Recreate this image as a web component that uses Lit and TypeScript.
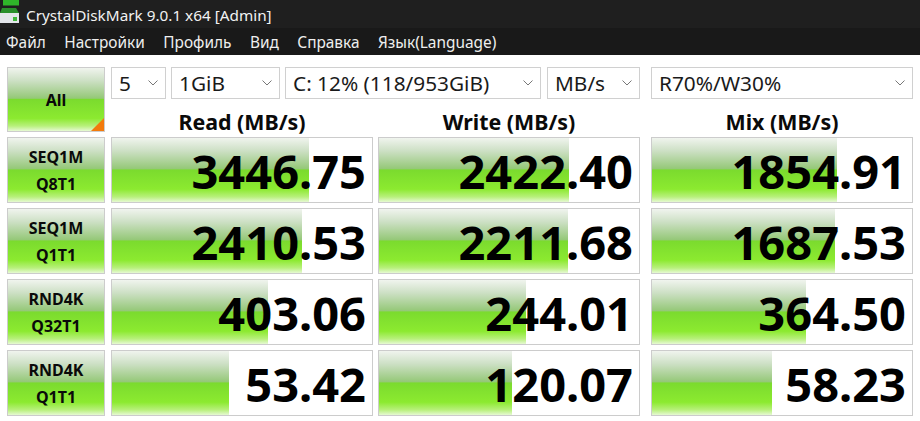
import { LitElement, html, css, svg } from "lit";
import { customElement } from "lit/decorators.js";

const rows = [
  { a: "SEQ1M", b: "Q8T1", cells: [["3446.75", 197], ["2422.40", 190], ["1854.91", 185]] },
  { a: "SEQ1M", b: "Q1T1", cells: [["2410.53", 190], ["2211.68", 189], ["1687.53", 183]] },
  { a: "RND4K", b: "Q32T1", cells: [["403.06", 156], ["244.01", 147], ["364.50", 154]] },
  { a: "RND4K", b: "Q1T1", cells: [["53.42", 117], ["120.07", 133], ["58.23", 120]] },
] as const;

const chevron = svg`<svg class="chev" width="10" height="6" viewBox="0 0 10 6"><path d="M.5.5 5 5 9.5.5" fill="none" stroke="#777" stroke-width="1"/></svg>`;

@customElement("app-root")
export class AppRoot extends LitElement {
  static styles = css`
    :host { display: block; width: 920px; height: 421px; overflow: hidden; background: #fff; font-family: "Noto Sans", "Open Sans", sans-serif; color: #000; --bar: linear-gradient(#f0f4ee 0%, #cde0c5 20%, #95c878 48%, #7bdb2e 50%, #8cea30 80%, #b8f07c 92%, #e6f9d3 100%); }
    .title { height: 28px; background: #1f1f1f; color: #f2f2f2; display: flex; align-items: center; gap: 5px; font-size: 15.3px; box-sizing: border-box; padding-top: 1px; }
    .logo { flex: none; display: block; align-self: flex-start; margin-top: -1px; }
    .menu { height: 27px; background: #191919; color: #eee; display: flex; align-items: center; font-size: 15.4px; padding-left: 6px; gap: 18.5px; box-sizing: border-box; padding-top: 2px; }
    .main { display: grid; grid-template-columns: 99px 262px 262px 262px; grid-template-rows: 32px 28px repeat(4, 66px); gap: 5px; padding: 12px 0 0 7px; }
    .main > * { box-sizing: border-box; }
    .btn { width: 98px; border: 1px solid #ccc; background: var(--bar); display: flex; flex-direction: column; align-items: center; justify-content: center; font-weight: 700; font-size: 16px; position: relative; color: #0a0a0a; padding-top: 1px; }
    .all { grid-row: 1 / 3; height: 65px; }
    .corner { position: absolute; right: 0; bottom: 0; width: 0; height: 0; border-style: solid; border-width: 0 0 13px 13px; border-color: transparent transparent #f37a0c transparent; }
    .selects { grid-column: 2 / 5; display: flex; gap: 5px; height: 32px; }
    .sel { flex: none; box-sizing: border-box; height: 32px; border: 1px solid #d0d0d0; background: #fff; display: flex; align-items: center; justify-content: space-between; padding: 0 7px 1px 7px; font-size: 20.8px; color: #1a1a1a; white-space: nowrap; }
    .chev { flex: none; margin-top: 1px; }
    .w1 { width: 55px; } .w2 { width: 109px; } .w3 { width: 256px; } .w4 { width: 93px; margin: 0 6px 0 1px; } .w5 { width: 262px; }
    .head { font-weight: 700; font-size: 21.4px; line-height: 22px; padding-top: 7px; text-align: center; color: #0a0a0a; white-space: nowrap; }
    .head1 { grid-column: 2; }
    .cell { height: 66px; border: 1px solid #ccc; background: #fff; position: relative; display: flex; align-items: center; justify-content: flex-end; padding: 2px 6px 0 0; font-weight: 700; font-size: 47px; overflow: hidden; }
    .fill { position: absolute; left: 0; top: 0; bottom: 0; background: var(--bar); }
    .val { position: relative; line-height: 1; }
    .third { margin-left: 6px; margin-right: -6px; }
    .lab { line-height: 27px; }
  `;

  render() {
    return html`
      <div class="title">
        <svg class="logo" width="21" height="26" viewBox="0 0 21 26">
          <path d="M3 0h16v5.5H3z" fill="#2fb52a"/>
          <path d="M2 8h14l3 5H0z" fill="#2a8f2c" />
          <path d="M0 13h19v10H0z" fill="#e3e5ea"/>
          <rect x="13" y="17" width="4" height="4" fill="#3fb83a"/>
        </svg>
        <span>CrystalDiskMark 9.0.1 x64 [Admin]</span>
      </div>
      <div class="menu">
        <span>Файл</span><span>Настройки</span><span>Профиль</span><span>Вид</span><span>Справка</span><span>Язык(Language)</span>
      </div>
      <div class="main">
        <div class="btn all">All<div class="corner"></div></div>
        <div class="selects">
          <div class="sel w1">5 ${chevron}</div>
          <div class="sel w2">1GiB ${chevron}</div>
          <div class="sel w3">C: 12% (118/953GiB) ${chevron}</div>
          <div class="sel w4">MB/s ${chevron}</div>
          <div class="sel w5">R70%/W30% ${chevron}</div>
        </div>
        <div class="head head1">Read (MB/s)</div>
        <div class="head">Write (MB/s)</div>
        <div class="head third">Mix (MB/s)</div>
        ${rows.map(r => html`
          <div class="btn"><span class="lab">${r.a}</span><span class="lab">${r.b}</span></div>
          ${r.cells.map((c, i) => html`
            <div class="cell ${i === 2 ? "third" : ""}">
              <div class="fill" style="width:${c[1]}px"></div>
              <span class="val">${c[0]}</span>
            </div>`)}
        `)}
      </div>
    `;
  }
}
